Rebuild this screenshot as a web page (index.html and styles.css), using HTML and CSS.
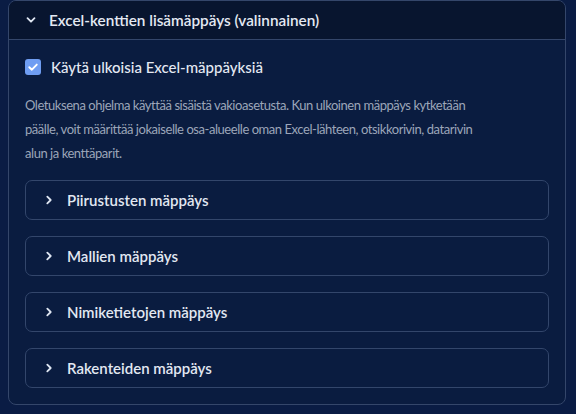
FILE: index.html
```html
<!DOCTYPE html>
<html lang="fi">
<head>
<meta charset="utf-8">
<link rel="stylesheet" href="styles.css">
</head>
<body>
<section class="panel">
  <header class="panel-head">
    <svg class="chev" width="10" height="10" viewBox="0 0 10 10"><path d="M1.5 3.2 L5 6.7 L8.5 3.2" fill="none" stroke="#dfe6f2" stroke-width="1.8" stroke-linecap="round" stroke-linejoin="round"/></svg>
    <span class="head-title">Excel-kenttien lisämäppäys (valinnainen)</span>
  </header>
  <div class="panel-body">
    <label class="check">
      <span class="box"><svg width="12" height="12" viewBox="0 0 12 12"><path d="M2.3 6.2 L4.9 8.7 L9.8 3.6" fill="none" stroke="#fff" stroke-width="1.9" stroke-linecap="round" stroke-linejoin="round"/></svg></span>
      <span class="check-label">Käytä ulkoisia Excel-mäppäyksiä</span>
    </label>
    <p class="desc">Oletuksena ohjelma käyttää sisäistä vakioasetusta. Kun ulkoinen mäppäys kytketään päälle, voit määrittää jokaiselle osa-alueelle oman Excel-lähteen, otsikkorivin, datarivin alun ja kenttäparit.</p>
    <div class="items">
      <div class="item"><svg class="chev-r" width="10" height="10" viewBox="0 0 10 10"><path d="M3.3 1.6 L6.7 5 L3.3 8.4" fill="none" stroke="#dfe6f2" stroke-width="1.8" stroke-linecap="round" stroke-linejoin="round"/></svg><span>Piirustusten mäppäys</span></div>
      <div class="item"><svg class="chev-r" width="10" height="10" viewBox="0 0 10 10"><path d="M3.3 1.6 L6.7 5 L3.3 8.4" fill="none" stroke="#dfe6f2" stroke-width="1.8" stroke-linecap="round" stroke-linejoin="round"/></svg><span>Mallien mäppäys</span></div>
      <div class="item"><svg class="chev-r" width="10" height="10" viewBox="0 0 10 10"><path d="M3.3 1.6 L6.7 5 L3.3 8.4" fill="none" stroke="#dfe6f2" stroke-width="1.8" stroke-linecap="round" stroke-linejoin="round"/></svg><span>Nimiketietojen mäppäys</span></div>
      <div class="item"><svg class="chev-r" width="10" height="10" viewBox="0 0 10 10"><path d="M3.3 1.6 L6.7 5 L3.3 8.4" fill="none" stroke="#dfe6f2" stroke-width="1.8" stroke-linecap="round" stroke-linejoin="round"/></svg><span>Rakenteiden mäppäys</span></div>
    </div>
  </div>
</section>
</body>
</html>
```
FILE: styles.css
```css
* { box-sizing: border-box; }
html, body { margin: 0; padding: 0; }
body {
  background: #0a1c44;
  font-family: Lato, "Noto Sans", sans-serif;
  color: #e2e8f2;
  width: 576px;
  height: 414px;
  padding: 0 10px 0 8px;
}
.panel {
  border: 1px solid #34466a;
  border-radius: 8px;
  background: #0a1c40;
  overflow: hidden;
  height: 405px;
}
.panel-head {
  height: 39px;
  background: #08152f;
  border-bottom: 1px solid #34466a;
  display: flex;
  align-items: center;
  padding-left: 17px;
  gap: 13px;
}
.head-title {
  font-size: 15.3px;
  font-weight: 600;
  color: #e4e9f3;
}
.panel-body {
  padding: 18px 16px 16px 16px;
}
.check {
  display: flex;
  align-items: center;
  gap: 10px;
}
.box {
  width: 16px;
  height: 16px;
  border-radius: 3px;
  background: #6f9df2;
  display: flex;
  align-items: center;
  justify-content: center;
}
.check-label {
  font-size: 15px;
  font-weight: 500;
  color: #e4e9f3;
}
.desc {
  margin: 17px 0 0 0;
  max-width: 466px;
  font-size: 13px;
  letter-spacing: -0.45px;
  line-height: 24px;
  color: #9ca6b9;
}
.items {
  margin-top: 15px;
  display: flex;
  flex-direction: column;
  gap: 16px;
}
.item {
  height: 40px;
  border: 1px solid #33466b;
  border-radius: 7px;
  display: flex;
  align-items: center;
  padding-left: 18px;
  gap: 13px;
  font-size: 15px;
  font-weight: 600;
  color: #e2e8f2;
}
```
